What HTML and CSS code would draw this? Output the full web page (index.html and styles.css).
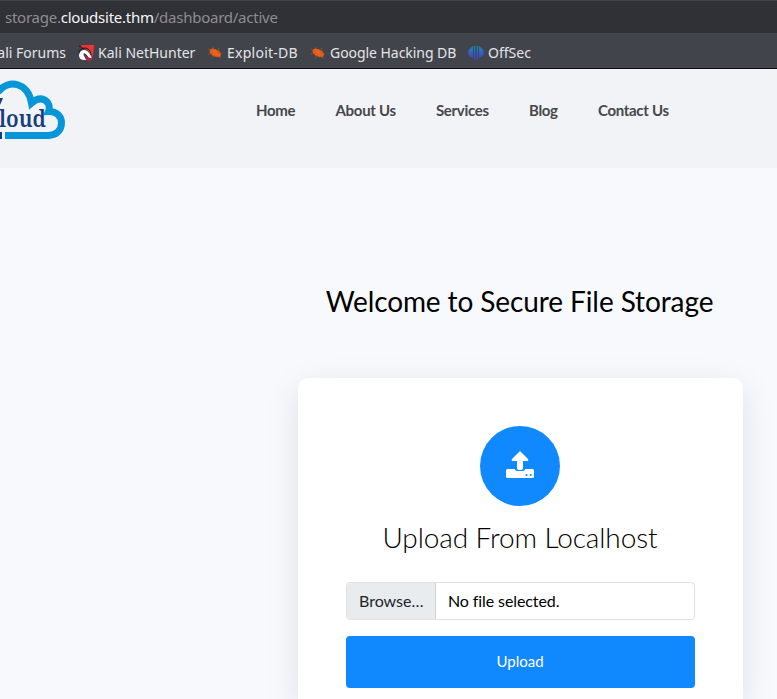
FILE: index.html
```html
<!DOCTYPE html>
<html lang="en">
<head>
<meta charset="utf-8">
<title>Secure File Storage</title>
<link rel="stylesheet" href="styles.css">
</head>
<body>
<div class="browser">
  <div class="urlbar"><span>storage.<b>cloudsite.thm</b>/dashboard/active</span></div>
  <div class="bookmarks">
    <span class="bookmark forums">ali Forums</span>
    <span class="bookmark hunter"><svg viewBox="0 0 16 16"><path d="M4 0H16L15 11L12 13C13 9 11 5 7 4L2 3Z" fill="#f23138"/><path d="M1 1L6 4M1 8C1 5 4 3 7 3C12 4 13 7 13 11" stroke="#171b24" stroke-width="1" fill="none"/><path d="M1 10C2 5 6 4 9 6C12 8 12 11 14 13C12 14 10 11 8 9C5 7 4 10 9 15H6C2 15 1 12 1 10Z" fill="#fff"/><path d="M8 11C10 11 11 15 15 13L13 16H9L7 13Z" fill="#b32245"/><path d="M3 8Q7 5 10 9L12 12" stroke="#fff" stroke-width="2.500" fill="none"/></svg><span>Kali NetHunter</span></span>
    <span class="bookmark exploit"><svg viewBox="0 0 16 16"><use href="#bug"/></svg><span>Exploit-DB</span></span>
    <span class="bookmark google"><svg viewBox="0 0 16 16"><use href="#bug"/></svg><span>Google Hacking DB</span></span>
    <span class="bookmark offsec"><svg viewBox="0 0 16 16"><path d="M7.300 1V15.500L6 14V1ZM8.700 1V15.500L10 14V1ZM5 1V13L1.500 11Q-1 7 1.500 4ZM11 1V13L14.500 11Q17 7 14.500 4Z" fill="url(#blue)"/></svg><span>OffSec</span></span>
  </div>
</div>
<header class="header">
  <svg class="logo" viewBox="0 0 70 72"><path d="M-2 23C9 9 28 14 31.500 34C42 25 52 33 48.500 42.500C56 42 61.500 47 61.500 54C61.500 61.500 56 66.500 48.500 66.500H5" fill="none" stroke="#0796d8" stroke-width="7"/><path d="M0 29H3L0 36ZM0 63H2V70H0Z" fill="#173d7d"/><text x="-1" y="58" textLength="47" lengthAdjust="spacingAndGlyphs">loud</text></svg>
  <nav class="nav"><a>Home</a><a>About Us</a><a>Services</a><a>Blog</a><a>Contact Us</a></nav>
</header>
<main class="main">
  <h1>Welcome to Secure File Storage</h1>
  <section class="card">
    <div class="circle"><svg viewBox="0 0 28 28"><path d="M14 0L22 8Q23 10 21 10H17V17Q17 19 15 19H13Q11 19 11 17V10H7Q5 10 6 8ZM1.500 18H9Q9 20 12 20H16Q19 20 19 18H26.500Q28 18 28 19.500V25.500Q28 27 26.500 27H1.500Q0 27 0 25.500V19.500Q0 18 1.500 18Z" fill="white"/><circle cx="20.500" cy="24" r="1.100" fill="#1089ff"/><circle cx="24.700" cy="24" r="1.100" fill="#1089ff"/></svg></div>
    <h2>Upload From Localhost</h2>
    <div class="file"><span class="browse">Browse…</span><span class="empty">No file selected.</span></div>
    <button class="upload">Upload</button>
  </section>
</main>
<svg class="defs"><defs><linearGradient id="blue" x1="0" y1="0" x2="0" y2="1"><stop stop-color="#138eb8"/><stop offset="1" stop-color="#5432d0"/></linearGradient><g id="bug"><path d="M2.500 5L5 3.500L8 4L12 6L14 9L13 12L10 12L6 11L3 8Z" fill="#f06015"/><path d="M1 4L5 6M6 2L7 5M12 3L10 7M1 9L6 8M5 13L8 9M10 8L15 8M10 11L14 13" stroke="#a5532f" stroke-width=".7"/></g></defs></svg>
</body>
</html>
```
FILE: styles.css
```css
*{box-sizing:border-box}
body{margin:0;height:699px;overflow:hidden;background:#f8f9fd;font-family:Lato,sans-serif;color:#000;display:flex;flex-direction:column}
.browser{flex:none;height:69px;background:#42444c;border-top:1px solid #42444c;border-bottom:1px solid #0c0c12;font-family:"Noto Sans",sans-serif}
.urlbar{height:32px;background:#303136;padding-left:5px;font-size:15px;line-height:33px;letter-spacing:-.25px;color:#8d8d91;white-space:nowrap}
.urlbar b{font-weight:400;color:#f5f5f6}
.bookmarks{height:35px;display:flex;align-items:center;padding-top:4px;font-size:14px;color:#e4e4e6;white-space:nowrap}
.bookmark{display:flex;align-items:center;gap:4px;flex:none}
.bookmark svg{width:16px;height:16px}
.forums{width:78px;padding-right:12px;justify-content:flex-end}
.hunter{width:129px}.exploit{width:103px;letter-spacing:.25px}.google{width:158px;letter-spacing:-.05px}
.header{flex:none;height:99px;background:#f2f3f7;display:flex;align-items:flex-start}
.logo{width:70px;height:72px;margin-right:186px;flex:none}
.logo text{font:600 23px "Noto Serif","DejaVu Serif",serif;fill:#173d7d}
.nav{display:flex;gap:40.2px;padding-top:31px;font-size:15px;letter-spacing:-.3px;line-height:20px;font-weight:700;color:#46474a;white-space:nowrap}
.main{flex:1;min-height:0;margin-left:298px;width:445px;display:flex;flex-direction:column}
h1{flex:none;margin:0;padding:114px 2px 0 0;height:210px;text-align:center;font-size:28px;letter-spacing:-.1px;line-height:38px;font-weight:400;white-space:nowrap}
.card{flex:1;min-height:0;padding:48px 48px 0;background:#fff;border-radius:10px 10px 0 0;box-shadow:0 10px 34px rgba(0,0,0,.1)}
.circle{width:80px;height:80px;margin:0 0 0 134px;border-radius:50%;background:#1089ff;display:flex;align-items:center;justify-content:center}
.circle svg{width:28px;height:28px;margin-top:-3px}
h2{margin:9px 0 23px;padding-right:1px;text-align:center;font-weight:300;font-size:28px;letter-spacing:-.1px;line-height:44px;white-space:nowrap}
.file{height:38px;display:flex;border:1px solid #dfe1e3;border-radius:4px;overflow:hidden;font-size:16px;line-height:35px;white-space:nowrap}
.browse{width:89px;background:#e9ecef;border-right:1px solid #ced4da;padding-left:12px;color:#212529}
.empty{padding-left:12px;letter-spacing:-.1px}
.upload{display:block;width:100%;height:52px;margin-top:16px;padding:0 1px 2px 0;border:0;border-radius:4px;background:#1089ff;color:#fff;font:400 15px Lato,sans-serif}
.defs{position:absolute;width:0;height:0}
```
